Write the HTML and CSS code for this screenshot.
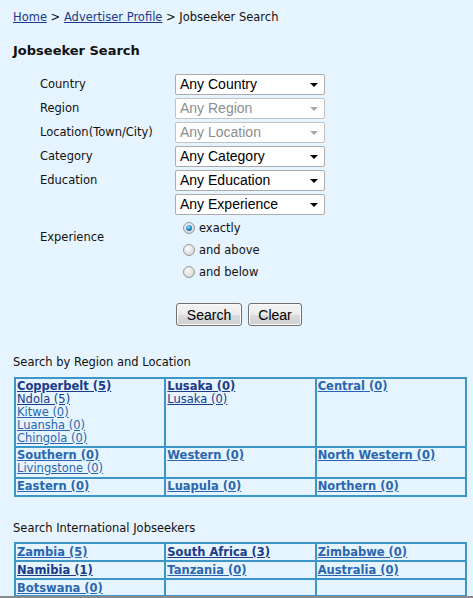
FILE: index.html
```html
<!DOCTYPE html>
<html>
<head>
<meta charset="utf-8">
<link rel="stylesheet" href="styles.css">
</head>
<body>
<div class="page">
  <div class="crumbs"><a href="#">Home</a> &gt; <a href="#">Advertiser Profile</a> &gt; Jobseeker Search</div>
  <h1 class="title">Jobseeker Search</h1>

  <div class="form">
    <div class="lbl">Country</div>
    <div class="field"><span class="sel"><span class="val">Any Country</span></span></div>
    <div class="lbl">Region</div>
    <div class="field"><span class="sel disabled"><span class="val">Any Region</span></span></div>
    <div class="lbl">Location(Town/City)</div>
    <div class="field"><span class="sel disabled"><span class="val">Any Location</span></span></div>
    <div class="lbl">Category</div>
    <div class="field"><span class="sel"><span class="val">Any Category</span></span></div>
    <div class="lbl">Education</div>
    <div class="field"><span class="sel"><span class="val">Any Education</span></span></div>
    <div class="lbl exp">Experience</div>
    <div class="field"><span class="sel"><span class="val">Any Experience</span></span></div>
    <div class="radio"><span class="rb on"></span>exactly</div>
    <div class="radio"><span class="rb"></span>and above</div>
    <div class="radio"><span class="rb"></span>and below</div>
  </div>

  <div class="buttons">
    <span class="btn search">Search</span>
    <span class="btn clear">Clear</span>
  </div>

  <div class="section">Search by Region and Location</div>
  <table class="grid regions">
    <tr class="r1">
      <td><a class="main v" href="#">Copperbelt (5)</a><br><a class="v" href="#">Ndola (5)</a><br><a href="#">Kitwe (0)</a><br><a href="#">Luansha (0)</a><br><a href="#">Chingola (0)</a></td>
      <td><a class="main v" href="#">Lusaka (0)</a><br><a class="v" href="#">Lusaka (0)</a></td>
      <td><a class="main" href="#">Central (0)</a></td>
    </tr>
    <tr class="r2">
      <td><a class="main" href="#">Southern (0)</a><br><a href="#">Livingstone (0)</a></td>
      <td><a class="main" href="#">Western (0)</a></td>
      <td><a class="main" href="#">North Western (0)</a></td>
    </tr>
    <tr class="r3">
      <td><a class="main" href="#">Eastern (0)</a></td>
      <td><a class="main" href="#">Luapula (0)</a></td>
      <td><a class="main" href="#">Northern (0)</a></td>
    </tr>
  </table>

  <div class="section intl">Search International Jobseekers</div>
  <table class="grid countries">
    <tr>
      <td><a class="main" href="#">Zambia (5)</a></td>
      <td><a class="main v" href="#">South Africa (3)</a></td>
      <td><a class="main" href="#">Zimbabwe (0)</a></td>
    </tr>
    <tr>
      <td><a class="main v" href="#">Namibia (1)</a></td>
      <td><a class="main" href="#">Tanzania (0)</a></td>
      <td><a class="main" href="#">Australia (0)</a></td>
    </tr>
    <tr class="last">
      <td><a class="main" href="#">Botswana (0)</a></td>
      <td></td>
      <td></td>
    </tr>
  </table>
</div>
<div class="bottomline"></div>
</body>
</html>
```

FILE: styles.css
```css
html, body {
  margin: 0;
  padding: 0;
}
body {
  background: #e5f4fe;
  font-family: "DejaVu Sans", Verdana, sans-serif;
  font-size: 11.5px;
  color: #111;
  height: 598px;
  overflow: hidden;
  position: relative;
}
.page {
  padding: 10px 0 0 13px;
}
a {
  color: #2a66b0;
}
a.v {
  color: #1a3a8a;
}
.crumbs {
  line-height: 14px;
}
.crumbs a {
  color: #1a3a8a;
}
.title {
  font-size: 13px;
  font-weight: bold;
  margin: 19px 0 0;
  line-height: 16px;
}
.form {
  display: grid;
  grid-template-columns: 135px 150px;
  grid-template-rows: repeat(6, 24px) repeat(3, 22px);
  margin: 13px 0 0 27px;
}
.lbl {
  display: flex;
  align-items: center;
}
.lbl.exp {
  grid-row: 6 / span 4;
}
.field {
  display: flex;
  align-items: center;
}
.sel {
  box-sizing: border-box;
  width: 150px;
  height: 21px;
  background: #fff;
  border: 1px solid #acacac;
  border-radius: 2px;
  font-family: "Liberation Sans", Arial, sans-serif;
  font-size: 14px;
  color: #000;
  display: flex;
  align-items: center;
  padding-left: 4px;
  position: relative;
}
.sel::after {
  content: "";
  position: absolute;
  right: 6px;
  top: 8px;
  border-left: 4px solid transparent;
  border-right: 4px solid transparent;
  border-top: 4px solid #000;
}
.sel.disabled {
  color: #8d8d8d;
  border-color: #c2c2c2;
}
.sel.disabled::after {
  border-top-color: #a8a8a8;
}
.radio {
  grid-column: 2;
  display: flex;
  align-items: center;
  padding: 2px 0 0 8px;
}
.rb {
  box-sizing: border-box;
  width: 12px;
  height: 12px;
  border-radius: 50%;
  border: 1px solid #9a9a9a;
  background: radial-gradient(circle at 40% 35%, #fafafa 0, #e2e2e2 55%, #c8c8c8 100%);
  margin-right: 4px;
  position: relative;
}
.rb.on::after {
  content: "";
  position: absolute;
  left: 2px;
  top: 2px;
  width: 6px;
  height: 6px;
  border-radius: 50%;
  background: radial-gradient(circle at 40% 35%, #9fe0ff 0, #1f8ad0 50%, #0d4f86 100%);
}
.buttons {
  display: flex;
  gap: 6px;
  margin: 21px 0 0 163px;
}
.btn {
  box-sizing: border-box;
  height: 23px;
  border: 1px solid #707070;
  border-radius: 3px;
  background: linear-gradient(#f4f4f4 0, #ebebeb 50%, #dcdcdc 51%, #cfcfcf 100%);
  font-family: "Liberation Sans", Arial, sans-serif;
  font-size: 14px;
  color: #000;
  display: flex;
  align-items: center;
  justify-content: center;
  box-shadow: inset 0 0 0 1px #fafafa;
}
.btn.search {
  width: 66px;
}
.btn.clear {
  width: 54px;
}
.section {
  margin-top: 29px;
  line-height: 14px;
}
.section.intl {
  margin-top: 24px;
}
.grid {
  border-collapse: collapse;
  width: 453px;
  margin-left: 1px;
  table-layout: fixed;
}
.grid td {
  border: 2px solid #3c97c6;
  vertical-align: top;
  padding: 1px 1px 0;
  line-height: 13px;
}
.regions {
  margin-top: 8px;
}
.regions .r1 td {
  height: 66px;
}
.regions .r2 td {
  height: 28px;
}
.regions .r3 td {
  height: 15px;
}
.countries {
  margin-top: 7px;
}
.countries td {
  height: 15px;
  padding: 1px 1px 0;
  line-height: 14px;
}
.countries .last td {
  height: 13px;
}
a.main {
  font-weight: bold;
}
.bottomline {
  position: absolute;
  left: 0;
  right: 0;
  top: 596px;
  height: 2px;
  background: #8a8a8a;
}
```
